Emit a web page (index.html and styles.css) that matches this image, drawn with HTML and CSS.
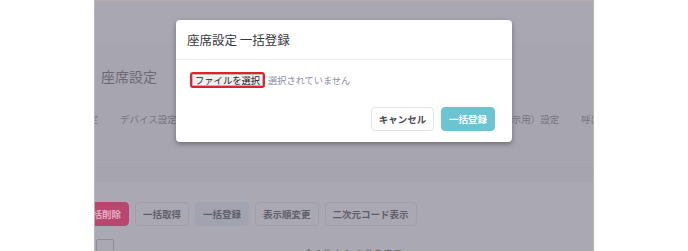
FILE: index.html
```html
<!DOCTYPE html>
<html lang="ja">
    <head>
        <meta charset="UTF-8">
        <title>座席設定</title>
        <link rel="stylesheet" href="styles.css">
    </head>
    <body>
        <div class="screen">
            <!--app header (dimmed)-->
            <div class="app-header"></div>

            <!--page title and tabs-->
            <div class="page-head">
                <h1 class="page-title">座席設定</h1>
                <ul class="tabs">
                    <li>基本設定</li>
                    <li>デバイス設定</li>
                    <li>受付端末（発券機）設定</li>
                    <li>番号表示設定</li>
                    <li>メール設定</li>
                    <li>表示（掲示用）設定</li>
                    <li>呼出設定</li>
                </ul>
            </div>
            <div class="tab-foot"></div>

            <!--seat list area-->
            <div class="content">
                <div class="toolbar">
                    <button class="tool danger">一括削除</button>
                    <button class="tool">一括取得</button>
                    <button class="tool active">一括登録</button>
                    <button class="tool">表示順変更</button>
                    <button class="tool">二次元コード表示</button>
                </div>
                <div class="list-top">
                    <span class="check-box"></span>
                    <span class="count">全 0 件中 0 - 0 件を表示</span>
                </div>
            </div>

            <!--bulk register dialog-->
            <div class="overlay">
                <div class="modal">
                    <div class="modal-header">座席設定 一括登録</div>
                    <div class="modal-body">
                        <button class="file-btn">ファイルを選択</button>
                        <span class="file-name">選択されていません</span>
                    </div>
                    <div class="modal-footer">
                        <button class="btn btn-cancel">キャンセル</button>
                        <button class="btn btn-primary">一括登録</button>
                    </div>
                </div>
            </div>
        </div>
    </body>
</html>
```

FILE: styles.css
```css
body {
    margin: 0;
    padding: 0;
    background-color: #fff;
    font-family: "Noto Sans CJK JP", "Noto Sans", sans-serif;
    display: flex;
    justify-content: center; /*center the dimmed screen*/
}

.screen {
    width: 500px;
    height: 251px;
    position: relative;
    overflow: hidden;
    background-color: #aaa9b3;
    border-left: 1px solid #b4b3bb;
    border-right: 1px solid #b9b3ae;
    box-sizing: border-box;
}

.app-header {
    height: 42px;
    background-color: #a9a8b2;
    border-top: 1px solid #b6afa9; /*thin tan line on top*/
}

.page-head {
    background-color: #a7a6b0;
    height: 124px;
    padding-top: 23px;
    box-sizing: border-box;
}

.page-title {
    margin: 0;
    padding-left: 6px;
    font-size: 14px;
    font-weight: 400;
    line-height: 20px;
    color: #6b6a74;
}

.tabs {
    list-style-type: none;
    margin: 27px 0 0 -35px;
    padding: 0;
    display: flex;
    gap: 22px;
    font-size: 9.5px;
    line-height: 12px;
    color: #75747e;
    white-space: nowrap;
}

.tab-foot {
    height: 14px;
    background-color: #a6a5af;
    border-top: 1px solid #a2a1ab;
}

.content {
    padding-top: 20px;
}

.toolbar {
    display: flex;
    gap: 6px;
    margin-left: -20px;
}

.tool {
    height: 24px;
    padding: 0 7px;
    font-family: inherit;
    font-size: 9.5px;
    font-weight: 700;
    color: #5f5e68;
    background-color: transparent;
    border: 1px solid #a09fa9;
    border-radius: 4px;
    white-space: nowrap;
}

.tool.danger {
    background-color: #b8476f;
    border-color: #b8476f;
    color: #e4b0c4;
}

.tool.active {
    background-color: #a1a4b0;
    border-color: #a1a4b0;
}

.list-top {
    margin-top: 13px;
    display: flex;
    align-items: flex-start;
}

.check-box {
    width: 18px;
    height: 20px;
    margin-left: 1px;
    border: 1px solid #8f8e98;
    border-radius: 2px;
    box-sizing: border-box;
}

.count {
    margin-left: 190px;
    margin-top: 7px;
    font-size: 9.5px;
    color: #6a6973;
}

/*dialog sits over the dimmed page*/
.overlay {
    position: absolute;
    top: 0;
    left: 0;
    right: 0;
    bottom: 0;
    display: flex;
    justify-content: center;
    align-items: flex-start;
    padding-top: 20px;
}

.modal {
    width: 336px;
    background-color: #fff;
    border-radius: 4px;
    box-shadow: 0 2px 5px rgba(40, 38, 50, 0.45);
}

.modal-header {
    height: 39px;
    display: flex;
    align-items: center;
    padding-left: 11px;
    font-size: 12.5px;
    color: #38373f;
    border-bottom: 1px solid #ececf0;
}

.modal-body {
    display: flex;
    align-items: center;
    gap: 3px;
    padding: 12px 14px 0;
}

.file-btn {
    height: 16px;
    padding: 0 3px;
    font-family: inherit;
    font-size: 9.3px;
    line-height: 11px;
    color: #222;
    background-color: #efefef;
    border: 2px solid #e0232b; /*focus ring*/
    border-radius: 3px;
    box-shadow: inset 0 0 0 1px #b9b9b9;
}

.file-name {
    font-size: 9.2px;
    color: #8d8ca6;
}

.modal-footer {
    display: flex;
    justify-content: flex-end;
    gap: 7px;
    padding: 19px 17px 11px;
}

.btn {
    height: 24px;
    font-family: inherit;
    font-size: 9.5px;
    font-weight: 700;
    border-radius: 4px;
    white-space: nowrap;
}

.btn-cancel {
    width: 63px;
    background-color: #fff;
    border: 1px solid #dfe3ea;
    color: #4a4a52;
}

.btn-primary {
    width: 54px;
    background-color: #6cc4d3;
    border: 1px solid #6cc4d3;
    color: #fff;
}
```
